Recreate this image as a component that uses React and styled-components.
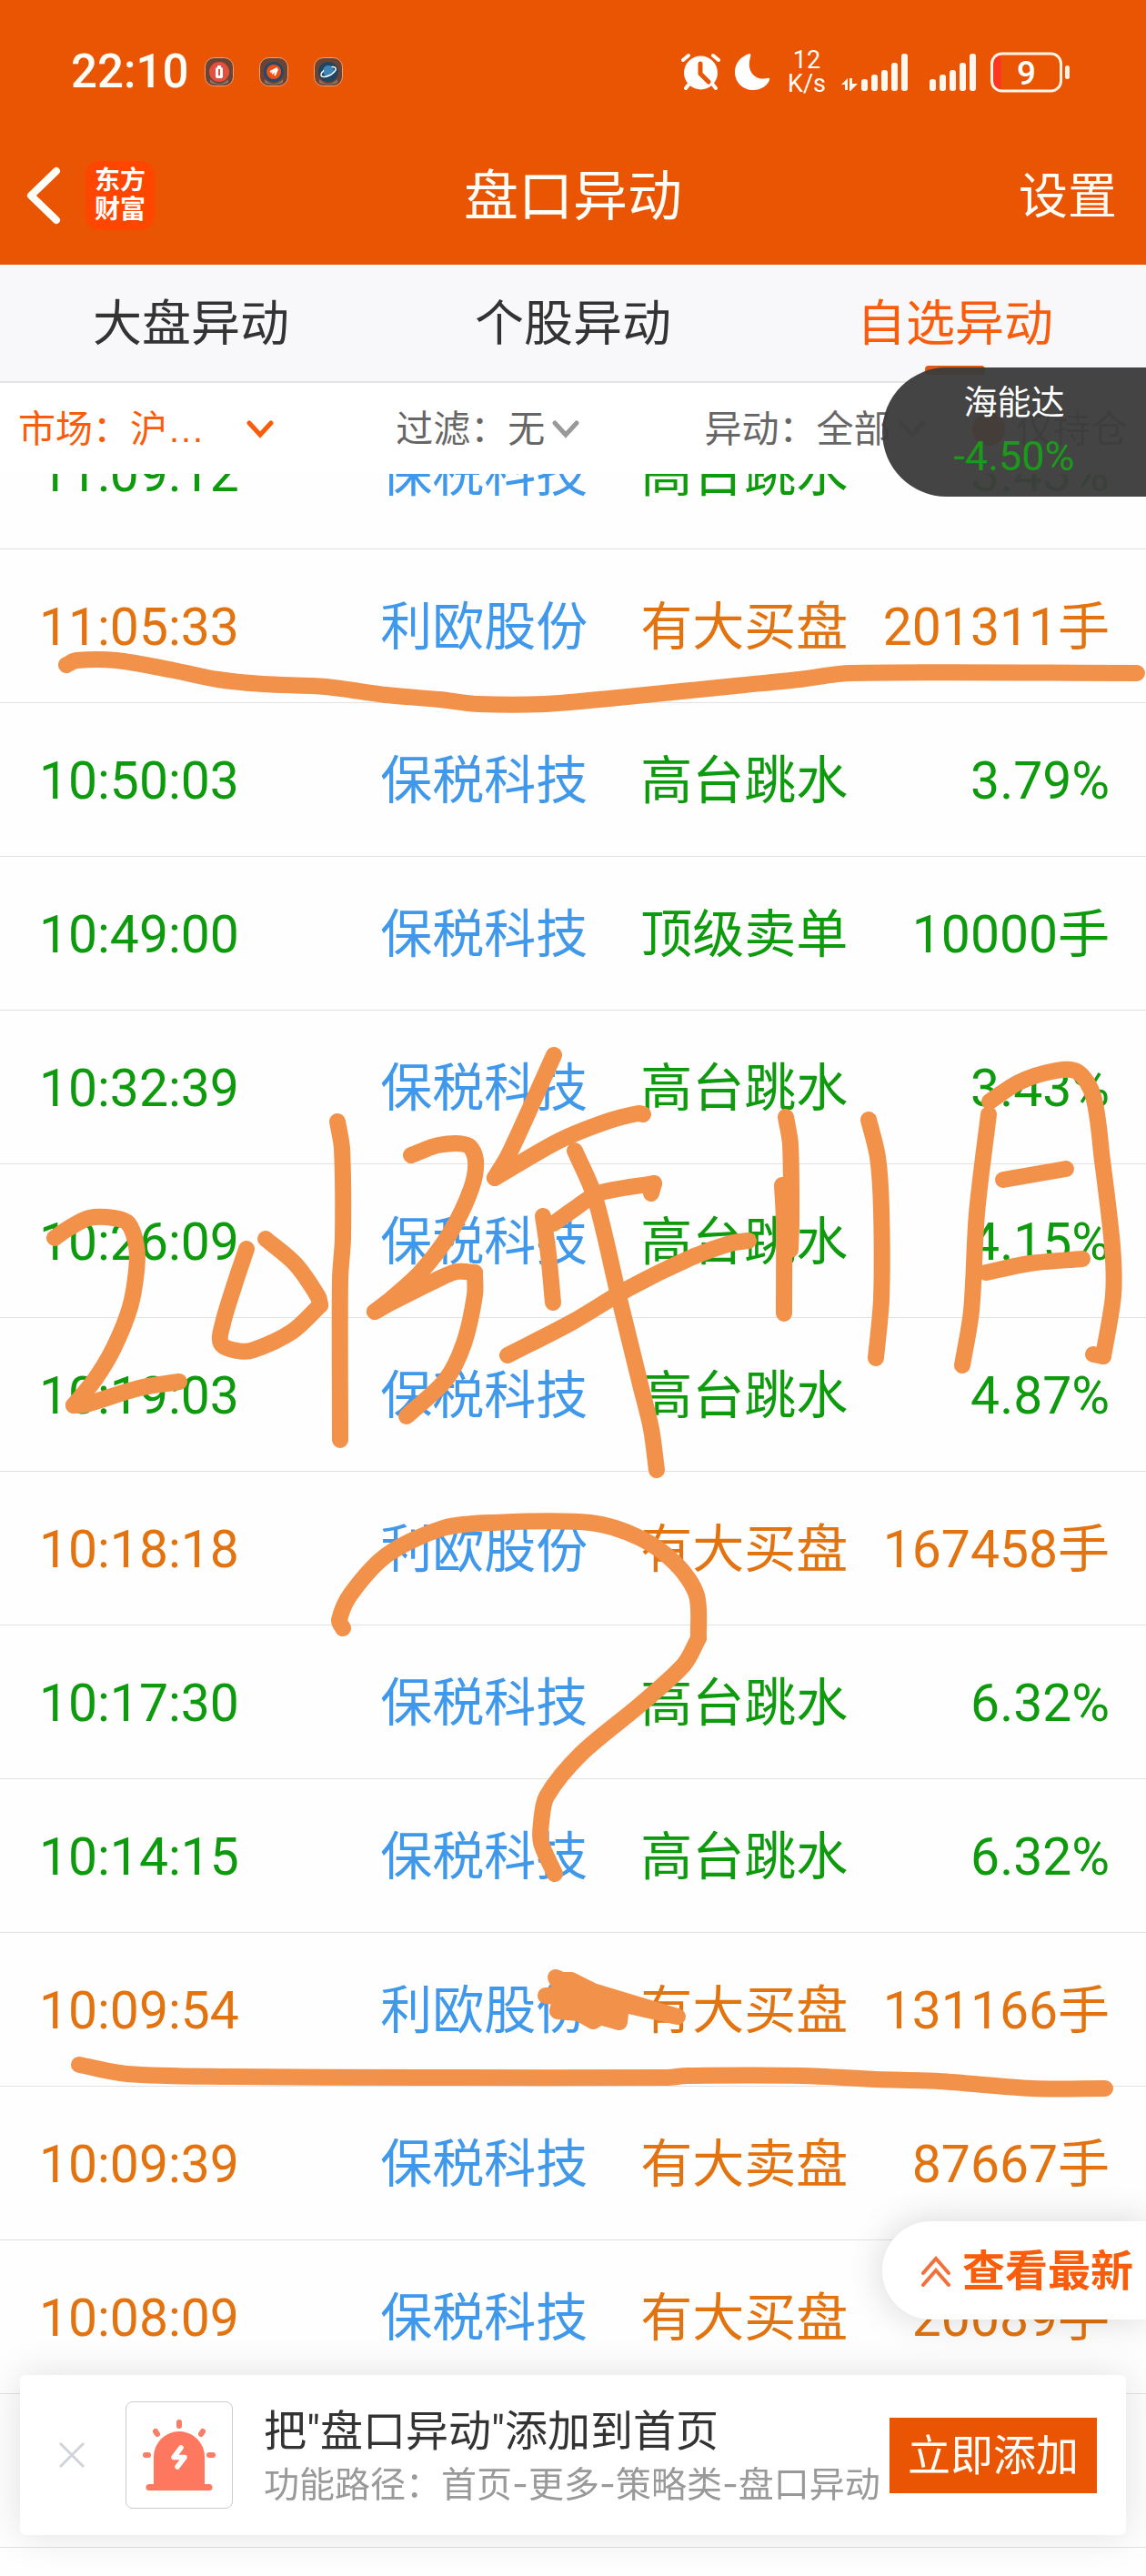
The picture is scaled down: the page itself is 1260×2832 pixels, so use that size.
import React from "react";
import styled, { createGlobalStyle } from "styled-components";

const SANS = `Roboto, "Noto Sans CJK SC", sans-serif`;
const BRAND = "#ea5504";
const ACCENT = "#f95c0a";
const TONES = { down: "#0d9a0d", deal: "#e2730f" };

const GlobalStyle = createGlobalStyle`
  *, *::before, *::after { box-sizing: border-box; }
  body { margin: 0; background: #fefefe; font-family: ${SANS}; }
  button, select, input { font: inherit; color: inherit; margin: 0; }
  button { border: 0; padding: 0; background: none; cursor: pointer; }
  svg { display: block; flex: none; }
`;

const Page = styled.div`
  position: relative;
  min-height: 100vh;
  overflow: hidden;
`;

const Header = styled.header`
  background: ${BRAND};
  color: #fffdf8;
`;

const StatusBar = styled.div`
  display: flex;
  align-items: center;
  justify-content: space-between;
  height: 139px;
  padding: 19px 84px 0 78px;
`;

const StatusGroup = styled.div`
  display: flex;
  align-items: center;
  gap: ${(p) => p.$gap}px;
`;

const Clock = styled.time`
  font-size: 51px;
  line-height: 60px;
  font-weight: 500;
  margin-right: -10px;
`;

const NetSpeed = styled.div`
  width: 44px;
  font-size: 27px;
  line-height: 26px;
  text-align: center;
`;

const NavBar = styled.div`
  display: grid;
  grid-template-columns: 1fr auto 1fr;
  align-items: center;
  height: 152px;
  padding: 0 32px;
`;

const NavStart = styled.div`
  display: flex;
  align-items: center;
  gap: 26px;
  margin-left: -4px;
`;

const BackButton = styled.button`
  display: flex;
`;

const AppLogo = styled.a`
  display: flex;
  align-items: center;
  justify-content: center;
  width: 76px;
  height: 76px;
  border-radius: 16px;
  background: #ff4600;
  color: #fff;
  font-size: 28px;
  line-height: 32px;
  font-weight: 700;
  text-align: center;
  text-decoration: none;
`;

const Title = styled.h1`
  margin: 0;
  padding-top: 4px;
  font-size: 60px;
  line-height: 72px;
  font-weight: 400;
`;

const SettingsButton = styled.button`
  justify-self: end;
  padding-top: 4px;
  font-size: 54px;
  line-height: 72px;
`;

const Tabs = styled.nav`
  display: grid;
  grid-template-columns: repeat(3, 1fr);
  height: 130px;
  background: #f8f8fb;
  border-bottom: 2px solid #e4e4e6;
`;

const Tab = styled.button`
  position: relative;
  padding-top: 4px;
  font-size: 54px;
  line-height: 72px;
  color: ${(p) => (p.$active ? ACCENT : "#333")};

  &::after {
    content: "";
    display: ${(p) => (p.$active ? "block" : "none")};
    position: absolute;
    bottom: 7px;
    left: calc(50% - 33px);
    width: 66px;
    height: 10px;
    border-radius: 4px;
    background: #dc5a14;
  }
`;

const Filters = styled.form`
  display: grid;
  grid-template-columns: 415fr 339fr 294fr 191fr;
  align-items: center;
  height: 100px;
  padding: 2px 0 0 20px;
  background: #fff;
  font-size: 41px;
  line-height: 60px;
  color: #666;
`;

const Filter = styled.div`
  display: flex;
  align-items: center;
  color: ${(p) => (p.$active ? ACCENT : "#666")};
`;

const FilterSelect = styled.select`
  appearance: none;
  border: 0;
  padding: 0;
  margin-right: 8px;
  width: ${(p) => p.$width};
  background: none;
  font-family: "Liberation Sans", "Noto Sans CJK SC", sans-serif;
`;

const HoldingOnly = styled.label`
  display: flex;
  align-items: center;
  gap: 12px;
`;

const Tick = styled.input`
  appearance: none;
  width: 36px;
  height: 36px;
  border-radius: 50%;
  background: ${ACCENT};
`;

const ListViewport = styled.main`
  overflow: hidden;
`;

const List = styled.table`
  width: 100%;
  margin-top: -87px;
  border-collapse: collapse;
  table-layout: fixed;
  font-size: 57px;
  line-height: 84px;
`;

const Row = styled.tr`
  height: 169px;
  border-bottom: 1px solid #e2e2e2;
  color: ${(p) => TONES[p.$tone]};
`;

const Cell = styled.td`
  width: ${(p) => p.$width};
  padding: 5px ${(p) => (p.$end ? 40 : 0)}px 0 ${(p) => (p.$start ? 43 : 0)}px;
  text-align: ${(p) => (p.$end ? "right" : "left")};
  white-space: nowrap;
`;

const StockLink = styled.a`
  color: #4098ea;
  text-decoration: none;
`;

const StockBubble = styled.aside`
  position: absolute;
  top: 404px;
  right: 0;
  display: flex;
  flex-direction: column;
  align-items: center;
  justify-content: center;
  width: 290px;
  height: 142px;
  padding-bottom: 4px;
  border-radius: 71px 0 0 71px;
  background: rgba(60, 60, 60, 0.96);
  color: #fff;
  font-size: 37px;
  line-height: 58px;
`;

const Change = styled.span`
  font-size: 45px;
  color: #1a991a;
`;

const LatestButton = styled.button`
  position: fixed;
  right: 0;
  bottom: 282px;
  display: flex;
  align-items: center;
  gap: 12px;
  height: 108px;
  padding: 2px 14px 0 42px;
  border-radius: 54px 0 0 54px;
  background: #fff;
  box-shadow: 0 0 40px rgba(0, 0, 0, 0.16);
  color: ${ACCENT};
  font-size: 47px;
  line-height: 60px;
  font-weight: 700;
`;

const Banner = styled.section`
  position: fixed;
  left: 22px;
  right: 22px;
  bottom: 45px;
  display: flex;
  align-items: center;
  height: 176px;
  padding: 0 32px 0 40px;
  border-radius: 6px;
  background: #fff;
  box-shadow: 0 0 44px rgba(0, 0, 0, 0.12);
`;

const CloseButton = styled.button`
  display: flex;
  margin-right: 42px;
`;

const BannerIcon = styled.div`
  flex: none;
  width: 118px;
  height: 118px;
  margin-right: 34px;
  border: 1px solid #ccc;
  border-radius: 8px;
`;

const BannerText = styled.div`
  flex: 1;
  min-width: 0;
  padding-top: 6px;
  white-space: nowrap;
`;

const BannerTitle = styled.h2`
  margin: 0;
  font-size: 47px;
  line-height: 58px;
  font-weight: 400;
  color: #333;
`;

const BannerPath = styled.p`
  margin: 0;
  font-family: Inter, "Noto Sans CJK SC", sans-serif;
  font-size: 39px;
  line-height: 58px;
  color: #999;
`;

const AddButton = styled.button`
  flex: none;
  width: 228px;
  height: 83px;
  padding-top: 2px;
  background: ${BRAND};
  color: #fffdf8;
  font-size: 47px;
  line-height: 60px;
`;

const Ink = styled.svg`
  position: absolute;
  top: 0;
  left: 0;
  width: 100%;
  height: auto;
  pointer-events: none;
`;

const rows = [
  ["11:09:12", "保税科技", "高台跳水", "3.43%", "down"],
  ["11:05:33", "利欧股份", "有大买盘", "201311手", "deal"],
  ["10:50:03", "保税科技", "高台跳水", "3.79%", "down"],
  ["10:49:00", "保税科技", "顶级卖单", "10000手", "down"],
  ["10:32:39", "保税科技", "高台跳水", "3.43%", "down"],
  ["10:26:09", "保税科技", "高台跳水", "4.15%", "down"],
  ["10:19:03", "保税科技", "高台跳水", "4.87%", "down"],
  ["10:18:18", "利欧股份", "有大买盘", "167458手", "deal"],
  ["10:17:30", "保税科技", "高台跳水", "6.32%", "down"],
  ["10:14:15", "保税科技", "高台跳水", "6.32%", "down"],
  ["10:09:54", "利欧股份", "有大买盘", "131166手", "deal"],
  ["10:09:39", "保税科技", "有大卖盘", "87667手", "deal"],
  ["10:08:09", "保税科技", "有大买盘", "20089手", "deal"],
  ["", "", "", "", "deal"],
];

const inkStrokes = [
  // upper underline
  [73,731,84,726,128,726,191,737,240,747,289,752,358,755,424,764,483,769,526,774,599,774,680,767,759,759,819,753,879,747,935,740,1250,740],
  // lower underline
  [87,2270,140,2280,247,2283,466,2284,733,2284,756,2282,882,2282,963,2286,1032,2288,1135,2296,1215,2296],
  // 2
  [60,1361,76,1350,98,1339,125,1339,141,1345,150,1370,150,1397,143,1437,125,1482,104,1517,81,1545],
  [81,1545,94,1544,153,1526,197,1519],
  // 0
  [271,1373,257,1415,245,1455,243,1477,261,1485,279,1484,321,1464,352,1435],
  [352,1435,350,1426,325,1390,292,1362],
  // 1
  [371,1233,376,1263,377,1361,374,1406,374,1583],
  // 3
  [452,1270,482,1259,514,1259,523,1276,518,1307,494,1357,462,1399,430,1428,412,1442],
  [412,1442,430,1432,478,1408,502,1398,522,1399],
  [522,1399,522,1424,510,1477,490,1517,447,1557],
  // year
  [609,1160,560,1268,544,1295],
  [544,1295,615,1254,670,1232,702,1224,707,1225],
  [597,1337,603,1379,608,1432],
  [609,1345,630,1330,658,1312,719,1301],
  [719,1301,716,1312],
  [558,1490,630,1453,690,1417,759,1383,803,1367,823,1364],
  [632,1265,654,1316,680,1424,704,1522,716,1571,722,1616],
  // 11
  [864,1228,869,1258,870,1343,869,1374],
  [860,1303,862,1343,862,1444],
  [955,1231,965,1272,969,1330,969,1428,963,1493],
  // month
  [1087,1225,1074,1334,1068,1441,1058,1501],
  [1088,1211,1120,1190,1156,1178,1184,1178,1202,1205,1212,1276,1223,1370,1224,1424,1213,1491],
  [1213,1491,1202,1489],
  [1103,1297,1172,1285],
  [1084,1399,1132,1389,1190,1384],
  // question mark
  [377,1790,373,1781,386,1752,426,1709,487,1680,539,1674,649,1674,704,1691,744,1720,766,1754,768,1801],
  [768,1801,752,1830,704,1874,639,1928,601,1975,595,2004,595,2026,610,2060],
];

// Turns a flat list of points into a smooth curve through each of them.
function toCurve(flat) {
  const pts = [];
  for (let i = 0; i < flat.length; i += 2) pts.push([flat[i], flat[i + 1]]);
  let d = `M${pts[0].join(" ")}`;
  for (let i = 0; i < pts.length - 1; i++) {
    const a = pts[i];
    const b = pts[i + 1];
    const before = pts[i - 1] || a;
    const after = pts[i + 2] || b;
    const len = Math.hypot(b[0] - a[0], b[1] - a[1]);
    const dirA = [b[0] - before[0], b[1] - before[1]];
    const dirB = [after[0] - a[0], after[1] - a[1]];
    const ka = (len * 0.3) / (Math.hypot(...dirA) || 1);
    const kb = (len * 0.3) / (Math.hypot(...dirB) || 1);
    d += `C${a[0] + dirA[0] * ka} ${a[1] + dirA[1] * ka} ${b[0] - dirB[0] * kb} ${b[1] - dirB[1] * kb} ${b[0]} ${b[1]}`;
  }
  return d;
}

function Handwriting() {
  return (
    <Ink viewBox="0 0 1260 2832" fill="none" stroke="#f2914a" strokeWidth="18" strokeLinecap="round" strokeLinejoin="round" aria-hidden="true">
      {inkStrokes.map((s, i) => (
        <path key={i} d={toCurve(s)} />
      ))}
      <path
        fill="#f2914a"
        d="M611 2174L618 2177L628 2177L652 2189L745 2217L740 2216L683 2203L681 2223L660 2217L652 2222L636 2213L613 2211L617 2195L600 2194L620 2193Z"
      />
    </Ink>
  );
}

function Chevron({ color }) {
  return (
    <svg width="30" height="20" viewBox="0 0 30 20" fill="none" stroke={color} strokeWidth="5" strokeLinecap="round">
      <path d="M3 3L15 16L27 3" />
    </svg>
  );
}

function NoticeIcon({ children }) {
  return (
    <svg width="32" height="32" viewBox="0 0 32 32">
      <rect x="0.5" y="0.5" width="31" height="31" rx="10" fill="#6b4433" stroke="#f0a079" />
      <path d="M6 24Q16 34 26 24V28Q16 32 6 28Z" fill="#8a7468" />
      {children}
    </svg>
  );
}

function SignalBars({ data }) {
  const offset = data ? 22 : 0;
  const tops = [28, 23, 18, 10, 0];
  return (
    <svg width={data ? 81 : 51} height="41" viewBox={`0 0 ${data ? 81 : 51} 41`} fill="#fff8ee">
      {data && <path d="M0 34L7 27V40H4V34ZM9 27H12V33L18 33L10 41H9Z" />}
      {tops.map((t, i) => (
        <rect key={t} x={offset + i * 11} y={t} width="7" height={41 - t} rx="3" />
      ))}
    </svg>
  );
}

function SelectFilter({ id, label, value, active, width = "auto" }) {
  return (
    <Filter $active={active}>
      <label htmlFor={id}>{label}</label>
      <FilterSelect id={id} $width={width}>
        <option>{value}</option>
      </FilterSelect>
      <Chevron color={active ? ACCENT : "#999"} />
    </Filter>
  );
}

export default function App() {
  return (
    <Page lang="zh-CN">
      <GlobalStyle />
      <Header>
        <StatusBar>
          <StatusGroup $gap={28}>
            <Clock>22:10</Clock>
            <NoticeIcon>
              <circle cx="16" cy="16" r="11" fill="#e2503f" />
              <rect x="12" y="11" width="8" height="12" rx="2" fill="#fff" />
              <rect x="14" y="9" width="4" height="2" fill="#fff" />
              <rect x="15" y="13" width="2" height="7" fill="#e2503f" />
            </NoticeIcon>
            <NoticeIcon>
              <circle cx="16" cy="16" r="11" fill="#24496a" />
              <circle cx="16" cy="16" r="8" fill="#ee5016" />
              <path d="M12 16L20 12M14 18L20 13M17 20L20 13" stroke="#fff" strokeWidth="2" />
            </NoticeIcon>
            <NoticeIcon>
              <circle cx="16" cy="16" r="11" fill="#1f4560" />
              <circle cx="16" cy="15" r="6" fill="#3f86b5" />
              <ellipse cx="16" cy="16" rx="9" ry="4" fill="none" stroke="#fff" strokeWidth="1.5" transform="rotate(-28 16 16)" />
              <circle cx="16" cy="14" r="5" fill="#3f86b5" />
            </NoticeIcon>
          </StatusGroup>
          <StatusGroup $gap={16}>
            <svg width="43" height="42" viewBox="0 0 43 42" fill="none" strokeLinecap="round">
              <path d="M2 8L8 3M41 8L35 3" stroke="#fff" strokeWidth="4" />
              <path d="M9 34L5 39M34 34L38 39" stroke="#fff" strokeWidth="4" />
              <circle cx="21.5" cy="22" r="18.5" fill="#fff" />
              <path d="M21 12V23L30 32" stroke={BRAND} strokeWidth="5" />
            </svg>
            <svg width="41" height="42" viewBox="0 0 41 42" fill="#fff">
              <path d="M16 1C6 4 0 12 0 21C0 33 9 41 20 41C29 41 36 36 38 30Q39 27 35 28C24 31 12 22 17 5Q18 1 16 1Z" />
            </svg>
            <NetSpeed>12 K/s</NetSpeed>
            <SignalBars data />
            <SignalBars />
            <svg width="87" height="45" viewBox="0 0 87 45">
              <rect x="3.5" y="4" width="8" height="37" rx="3" fill="#ff3524" />
              <rect x="1.5" y="2" width="76" height="41" rx="11" fill="none" stroke="#fff3e4" strokeWidth="3" />
              <rect x="82" y="15" width="5" height="15" rx="2.5" fill="#fff3e4" />
              <text x="39.5" y="36" textAnchor="middle" fontFamily="Roboto" fontWeight="500" fontSize="37" fill="#fff">9</text>
            </svg>
          </StatusGroup>
        </StatusBar>
        <NavBar>
          <NavStart>
            <BackButton aria-label="返回">
              <svg width="40" height="64" viewBox="0 0 40 64" fill="none" stroke="#fffdf8" strokeWidth="8" strokeLinecap="round" strokeLinejoin="round">
                <path d="M34 5L6 32L34 59" />
              </svg>
            </BackButton>
            <AppLogo href="#">
              东方
              <br />
              财富
            </AppLogo>
          </NavStart>
          <Title>盘口异动</Title>
          <SettingsButton>设置</SettingsButton>
        </NavBar>
      </Header>

      <Tabs>
        <Tab>大盘异动</Tab>
        <Tab>个股异动</Tab>
        <Tab $active aria-current="page">自选异动</Tab>
      </Tabs>

      <Filters>
        <SelectFilter id="market" label="市场：" value="沪…" active width="120px" />
        <SelectFilter id="exclude" label="过滤：" value="无" />
        <SelectFilter id="kind" label="异动：" value="全部" />
        <HoldingOnly>
          <Tick type="checkbox" />
          仅持仓
        </HoldingOnly>
      </Filters>

      <ListViewport>
        <List>
          <tbody>
            {rows.map(([time, name, kind, value, tone], i) => (
              <Row key={i} $tone={tone}>
                <Cell $start $width="33.2%">{time}</Cell>
                <Cell $width="22.7%">
                  {name && <StockLink href="#">{name}</StockLink>}
                </Cell>
                <Cell $width="19%">{kind}</Cell>
                <Cell $end $width="25.1%">{value}</Cell>
              </Row>
            ))}
          </tbody>
        </List>
      </ListViewport>

      <StockBubble>
        <span>海能达</span>
        <Change>-4.50%</Change>
      </StockBubble>

      <LatestButton>
        <svg width="34" height="34" viewBox="0 0 34 34" fill="none" stroke="#f2703c" strokeWidth="4" strokeLinecap="round">
          <path d="M3 19L17 3L31 19M3 32L17 16L31 32" />
        </svg>
        查看最新
      </LatestButton>

      <Banner>
        <CloseButton aria-label="关闭">
          <svg width="34" height="34" viewBox="0 0 34 34" stroke="#d0d4da" strokeWidth="3">
            <path d="M4 4L30 30M30 4L4 30" />
          </svg>
        </CloseButton>
        <BannerIcon>
          <svg width="116" height="116" viewBox="1 1 116 116" fill="none" strokeLinecap="round" strokeLinejoin="round">
            <path d="M31 92V61A28 28 0 0 1 87 61V92Z" fill="#fe7860" />
            <path d="M26 94.5H92" stroke="#fe7860" strokeWidth="7" />
            <path d="M59 23V27M33 33L35 36M85 33L83 36M22 59H25M92 59H96" stroke="#f77e68" strokeWidth="6" />
            <path d="M61 51L53 61.5H65L57 72" stroke="#fff" strokeWidth="5.5" />
          </svg>
        </BannerIcon>
        <BannerText>
          <BannerTitle>把"盘口异动"添加到首页</BannerTitle>
          <BannerPath>功能路径：首页-更多-策略类-盘口异动</BannerPath>
        </BannerText>
        <AddButton>立即添加</AddButton>
      </Banner>

      <Handwriting />
    </Page>
  );
}
